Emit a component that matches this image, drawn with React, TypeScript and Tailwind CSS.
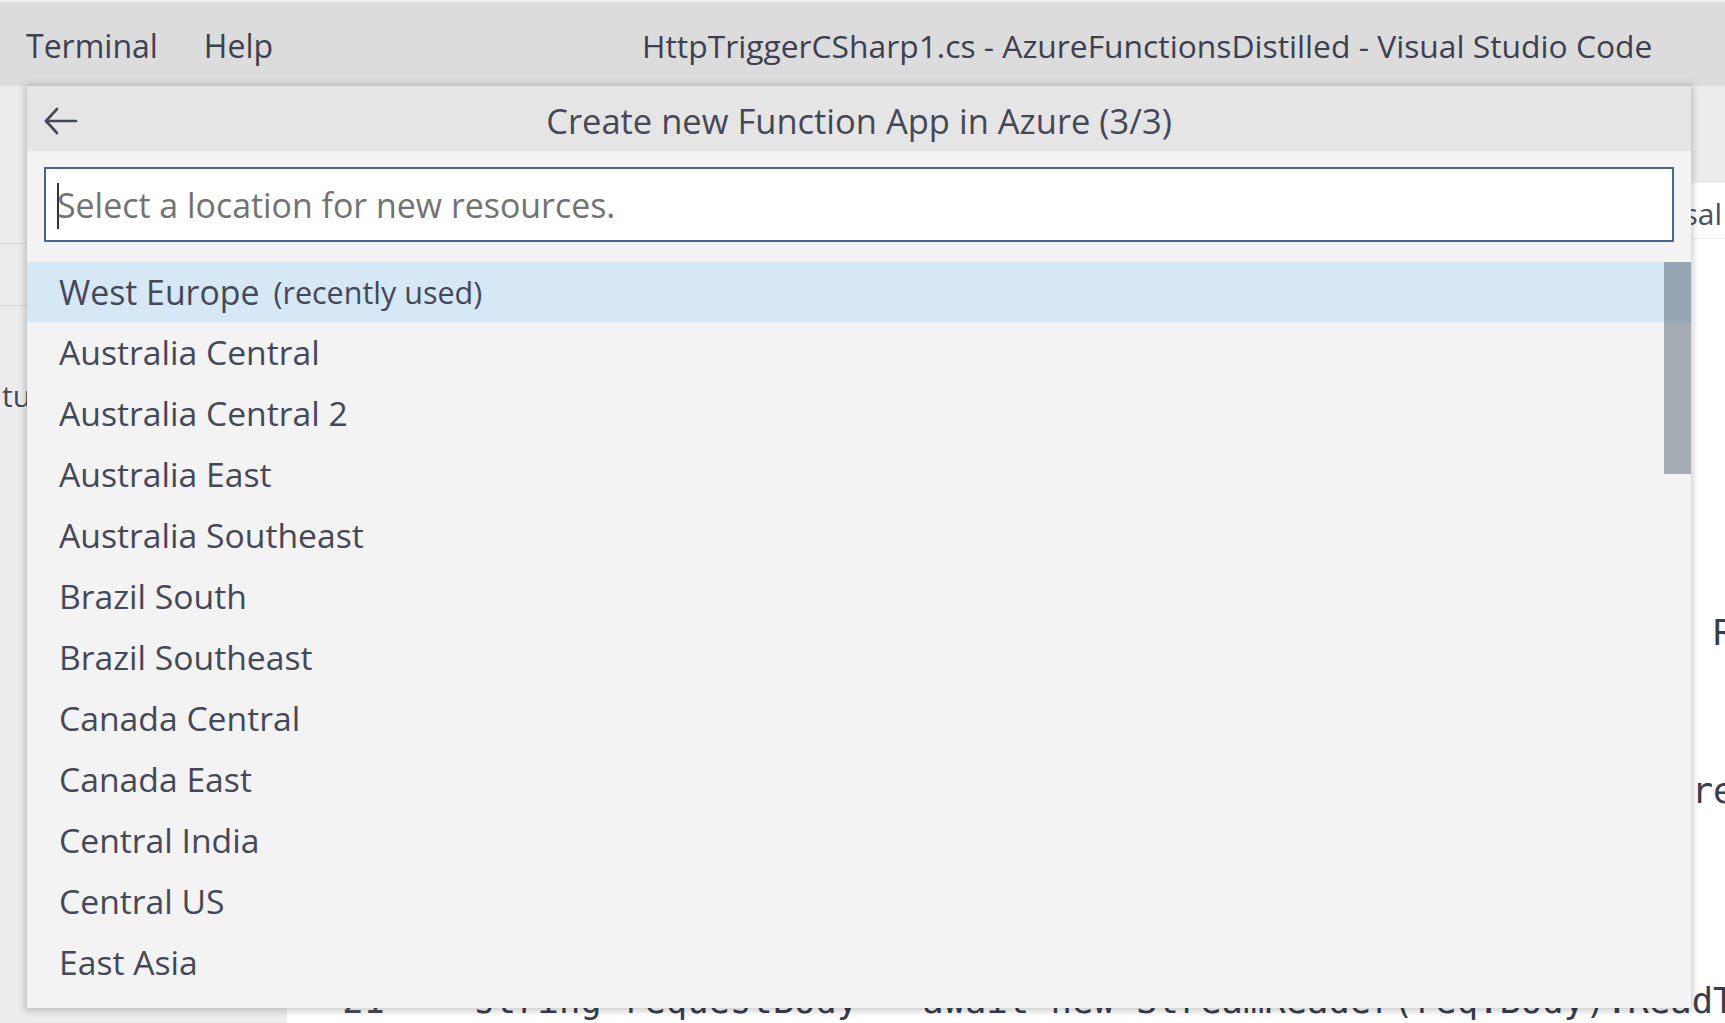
import React from 'react';

const locations = [
  'Australia Central',
  'Australia Central 2',
  'Australia East',
  'Australia Southeast',
  'Brazil South',
  'Brazil Southeast',
  'Canada Central',
  'Canada East',
  'Central India',
  'Central US',
  'East Asia',
];

// editor lines behind the quick pick, only the right end of some peeks out
const codeLines: [number, string][] = [
  [7, 'namespace Company.Function'],
  [8, '{'],
  [9, 'public static class HttpTriggerCSharp1'],
  [10, '{'],
  [11, '[FunctionName("HttpTriggerCSharp1")]'],
  [12, 'public static async Task<IActionResult> Run('],
  [13, ''],
  [14, '    [HttpTrigger(AuthorizationLevel.Anonymous, "get", "post", Route = null)] HttpRequest req,'],
  [15, '    ILogger log)'],
  [16, '{'],
  [17, '    log.LogInformation("C# HTTP trigger function processed a request.");'],
  [18, ''],
  [19, '    string name = req.Query["name"];'],
  [20, ''],
  [21, '    string requestBody = await new StreamReader(req.Body).ReadToEndAsync();'],
];

const BackArrow = () => (
  <svg width="36" height="30" viewBox="0 0 36 30" fill="none" stroke="#44475a" strokeWidth="2.6" strokeLinecap="round" strokeLinejoin="round">
    <path d="M14 3 L3 15 L14 27" />
    <path d="M3 15 H33" />
  </svg>
);

const App: React.FC = () => {
  return (
    <div className="relative w-[1725px] h-[1023px] overflow-hidden bg-white font-['Open_Sans',sans-serif]">
      {/* window title bar */}
      <div className="h-[86px] bg-[#dcdcdc] border-t-2 border-[#efefef] flex items-center pt-[3px] text-[32px] text-[#3d4050] whitespace-nowrap">
        <span className="ml-[26px]">Terminal</span>
        <span className="ml-[46px]">Help</span>
        <span className="ml-[369px] text-[31.8px]">HttpTriggerCSharp1.cs - AzureFunctionsDistilled - Visual Studio Code</span>
      </div>

      {/* workbench behind the picker */}
      <div className="flex h-[937px]">
        <div className="w-[287px] shrink-0 bg-[#ececec] flex flex-col">
          <div className="h-[158px] border-b border-[#d4d4d4]" />
          <div className="h-[62px] border-b border-[#d4d4d4]" />
          <div className="mt-[75px] pl-[2px] text-[30px] text-[#454857] leading-none whitespace-nowrap">tu</div>
        </div>
        <div className="flex-1 flex flex-col min-w-0">
          <div className="h-[97px] bg-[#ececec] shrink-0" />
          <div className="h-[56px] shrink-0 flex items-center justify-end pr-[3px] pt-[6px] text-[30px] text-[#4a4d5c] border-b border-[#ececec]">
            <span>sal</span>
          </div>
          <div className="font-['DejaVu_Sans_Mono',monospace] text-[35.5px] text-[#3a3d4d]">
            {codeLines.map(([n, code]) => (
              <div key={n} className="h-[52.5px] flex items-center whitespace-pre">
                <span className="w-[101px] shrink-0 pr-[3px] text-right text-[#4a4d5c]">{n}</span>
                <span>{code}</span>
              </div>
            ))}
          </div>
        </div>
      </div>

      {/* quick pick */}
      <div className="absolute left-[27px] top-[86px] w-[1664px] h-[922px] z-10 bg-[#f3f3f3] shadow-[0_1px_7px_2px_rgba(0,0,0,0.2)] flex flex-col">
        <div className="h-[65px] shrink-0 bg-[#e5e5e5] grid grid-cols-[1fr_auto_1fr] items-center pt-[4px]">
          <div className="pl-[16px] flex items-center">
            <BackArrow />
          </div>
          <div className="text-[34.5px] text-[#454857] whitespace-nowrap">Create new Function App in Azure (3/3)</div>
          <div />
        </div>

        <div className="px-[17px] pt-[16px]">
          <div className="h-[75px] bg-white border-2 border-[#4d6585] flex items-center pl-[11px] pt-[2px]">
            <span className="w-[2px] h-[46px] bg-[#333340] -mr-[2px]" />
            <span className="text-[33.9px] text-[#727272] whitespace-nowrap">Select a location for new resources.</span>
          </div>
        </div>

        <div className="relative mt-[20px] flex-1">
          <div className="h-[60px] bg-[#d6e7f6] flex items-center pl-[32px] text-[#454857] whitespace-nowrap">
            <span className="text-[33.8px]">West Europe</span>
            <span className="ml-[14px] text-[30.5px] pt-[2px]">(recently used)</span>
          </div>
          {locations.map((loc) => (
            <div key={loc} className="h-[61px] flex items-center pl-[32px] text-[33.7px] text-[#454857] whitespace-nowrap">
              {loc}
            </div>
          ))}
          <div className="absolute right-0 top-0 w-[27px] h-[212px] bg-[rgba(70,85,100,0.45)]" />
        </div>
      </div>
    </div>
  );
};

export default App;
